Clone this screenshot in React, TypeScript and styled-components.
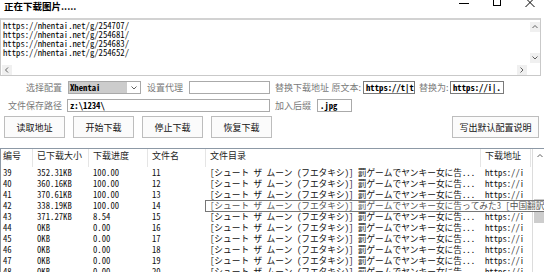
import React from 'react';
import styled, { createGlobalStyle } from 'styled-components';

const GlobalStyle = createGlobalStyle`
  html, body {
    margin: 0;
    padding: 0;
    background: #fff;
  }
  body {
    font-family: "Noto Sans CJK SC", "Noto Sans", sans-serif;
    font-size: 9px;
    color: #000;
  }
`;

const MONO = `"Noto Sans Mono CJK JP", "Liberation Mono", "Noto Sans CJK JP", monospace`;

const Window = styled.div`
  width: 544px;
  height: 272px;
  overflow: hidden;
  display: flex;
  flex-direction: column;
  background: #fff;
`;

const TitleBar = styled.div`
  height: 18px;
  flex-shrink: 0;
  display: flex;
  align-items: flex-start;
  justify-content: space-between;
`;

const Title = styled.div`
  padding-left: 4px;
  font-weight: bold;
  font-size: 9.5px;
  line-height: 12px;
`;

const Controls = styled.div`
  display: flex;
  gap: 24px;
  padding-right: 9px;
`;

const UrlBox = styled.div`
  width: 539px;
  height: 55px;
  flex-shrink: 0;
  border: 1px solid #c9c9c9;
  border-top: 2px solid #d2d2d2;
  display: grid;
  grid-template-columns: 1fr 10px;
  grid-template-rows: 1fr 10px;
`;

const UrlText = styled.div`
  padding: 1px 0 0 2px;
  font-family: ${MONO};
  font-size: 8.7px;
  line-height: 9px;
  white-space: pre;
  overflow: hidden;
`;

const VScroll = styled.div`
  display: flex;
  flex-direction: column;
  justify-content: space-between;
  padding: 2px 0;
`;

const HScroll = styled.div`
  display: flex;
  justify-content: space-between;
  padding: 0 3px 0 1px;
`;

const ArrowBox = styled.div`
  width: 10px;
  height: 10px;
  background: #f0f0f0;
  display: flex;
  align-items: center;
  justify-content: center;
`;

const Form = styled.div`
  display: flex;
  flex-direction: column;
  flex-shrink: 0;
  gap: 5px;
  margin-top: 5px;
`;

const FieldRow = styled.div`
  display: flex;
  align-items: center;
  height: 13px;
`;

const Label = styled.span<{ $w: number; $ml?: number }>`
  width: ${(p) => p.$w}px;
  margin-left: ${(p) => p.$ml ?? 0}px;
  flex-shrink: 0;
  text-align: right;
  color: #7a7a7a;
  font-size: 9px;
  line-height: 13px;
  white-space: nowrap;
`;

const Input = styled.div<{ $w: number; $ml: number; $dark?: boolean }>`
  width: ${(p) => p.$w}px;
  margin-left: ${(p) => p.$ml}px;
  height: 13px;
  box-sizing: border-box;
  flex-shrink: 0;
  border: 1px solid ${(p) => (p.$dark ? '#7a7a7a' : '#aaaaaa')};
  padding-left: 2px;
  font-family: ${MONO};
  font-weight: bold;
  font-size: 8.7px;
  line-height: 11px;
  white-space: pre;
  overflow: hidden;
`;

const Select = styled.div`
  width: 73px;
  margin-left: 6px;
  height: 13px;
  box-sizing: border-box;
  flex-shrink: 0;
  border: 1px solid #a9a9a9;
  display: flex;
  align-items: stretch;
`;

const Selected = styled.span`
  width: 57px;
  background: #cccccc;
  padding-left: 1px;
  font-family: ${MONO};
  font-weight: bold;
  font-size: 8.7px;
  line-height: 11px;
`;

const SelectArrow = styled.span`
  flex: 1;
  display: flex;
  align-items: center;
  justify-content: center;
`;

const ButtonRow = styled.div`
  display: flex;
  flex-shrink: 0;
  gap: 8px;
  padding: 0 5px 0 4px;
  margin-top: 4px;
`;

const Button = styled.button<{ $w: number; $push?: boolean }>`
  width: ${(p) => p.$w}px;
  height: 22px;
  margin-left: ${(p) => (p.$push ? 'auto' : '0')};
  padding: 0;
  background: #fbfbfb;
  border: 1px solid #bdbdbd;
  border-radius: 0;
  font-family: "Noto Sans CJK SC", sans-serif;
  font-size: 9px;
  color: #111;
`;

const Table = styled.div`
  margin-top: 10px;
  width: 545px;
  flex: 1;
  min-height: 0;
  border: 1px solid #8d99a6;
  border-right: none;
  border-bottom: none;
  display: flex;
  align-items: flex-start;
  overflow: hidden;
`;

const ListArea = styled.div`
  flex: 1;
  display: flex;
  flex-direction: column;
`;

const COLS = '32px 56px 59px 58px 275px 50px';

const HeaderRow = styled.div`
  display: grid;
  grid-template-columns: ${COLS};
  height: 18px;
  flex-shrink: 0;
`;

const HeaderCell = styled.div`
  padding: 1px 0 0 4px;
  border-right: 1px solid #e5e5e5;
  font-size: 9px;
  line-height: 11px;
  color: #1e1e1e;
  white-space: nowrap;
  overflow: hidden;
  &:first-child {
    padding-left: 2px;
  }
`;

const Row = styled.div`
  display: grid;
  grid-template-columns: ${COLS};
  height: 11px;
  flex-shrink: 0;
`;

const Cell = styled.div`
  position: relative;
  padding-left: 4px;
  font-family: ${MONO};
  font-size: 8.7px;
  line-height: 11px;
  color: #111;
  white-space: pre;
  overflow: hidden;
  &:first-child {
    padding-left: 2px;
  }
`;

const DirCell = styled(Cell)`
  overflow: visible;
`;

const Tip = styled.div`
  position: absolute;
  left: -1px;
  top: 0;
  z-index: 2;
  width: 360px;
  height: 12px;
  box-sizing: border-box;
  padding-left: 4px;
  background: #fff;
  border: 1px solid #767676;
  color: #555;
  font-family: ${MONO};
  font-size: 8.7px;
  line-height: 10px;
  white-space: pre;
`;

const ListScroll = styled.div`
  width: 13px;
  height: 130px;
  flex-shrink: 0;
  border-left: 1px solid #dcdcdc;
  display: flex;
  flex-direction: column;
  align-items: center;
`;

const ScrollUp = styled.div`
  height: 14px;
  display: flex;
  align-items: center;
`;

const Thumb = styled.div`
  margin-top: 36px;
  width: 11px;
  height: 24px;
  background: #cdcdcd;
`;

const Chevron: React.FC<{ dir: 'up' | 'down' | 'left' | 'right' }> = ({ dir }) => {
  const d = {
    up: 'M0.5 4 L3 1.5 L5.5 4',
    down: 'M0.5 1.5 L3 4 L5.5 1.5',
    left: 'M4 0.5 L1.5 3 L4 5.5',
    right: 'M1.5 0.5 L4 3 L1.5 5.5',
  }[dir];
  return (
    <svg width="6" height="6" viewBox="0 0 6 6">
      <path d={d} fill="none" stroke="#606060" strokeWidth="1" />
    </svg>
  );
};

const urls = [
  'https://nhentai.net/g/254707/',
  'https://nhentai.net/g/254681/',
  'https://nhentai.net/g/254683/',
  'https://nhentai.net/g/254652/',
];

const DIR = '[シュート ザ ムーン (フエタキシ)] 罰ゲームでヤンキー女に告...';
const FULL = '[シュート ザ ムーン (フエタキシ)] 罰ゲームでヤンキー女に告ってみた3 [中国翻訳]';

const rows = [
  { id: 39, size: '352.31KB', pct: '100.00', name: '11' },
  { id: 40, size: '360.16KB', pct: '100.00', name: '12' },
  { id: 41, size: '370.61KB', pct: '100.00', name: '13' },
  { id: 42, size: '338.19KB', pct: '100.00', name: '14', tip: true },
  { id: 43, size: '371.27KB', pct: '8.54', name: '15' },
  { id: 44, size: '0KB', pct: '0.00', name: '16' },
  { id: 45, size: '0KB', pct: '0.00', name: '17' },
  { id: 46, size: '0KB', pct: '0.00', name: '18' },
  { id: 47, size: '0KB', pct: '0.00', name: '19' },
  { id: 48, size: '0KB', pct: '0.00', name: '20' },
];

export default function App() {
  return (
    <>
      <GlobalStyle />
      <Window>
        <TitleBar>
          <Title>正在下载图片.....</Title>
          <Controls>
            <svg width="10" height="8" viewBox="0 0 10 8">
              <path d="M0 3.5 H10" stroke="#000" strokeWidth="1" />
            </svg>
            <svg width="8" height="8" viewBox="0 0 8 8">
              <rect x="0.5" y="-3.5" width="7" height="9" fill="none" stroke="#000" strokeWidth="1" />
            </svg>
            <svg width="10" height="8" viewBox="0 0 10 8">
              <path d="M0.5 -2 L9.5 7 M9.5 -2 L0.5 7" stroke="#000" strokeWidth="1" />
            </svg>
          </Controls>
        </TitleBar>

        <UrlBox>
          <UrlText>{urls.join('\n')}</UrlText>
          <VScroll>
            <ArrowBox><Chevron dir="up" /></ArrowBox>
            <ArrowBox><Chevron dir="down" /></ArrowBox>
          </VScroll>
          <HScroll>
            <ArrowBox><Chevron dir="left" /></ArrowBox>
            <ArrowBox><Chevron dir="right" /></ArrowBox>
          </HScroll>
          <div />
        </UrlBox>

        <Form>
          <FieldRow>
            <Label $w={62}>选择配置</Label>
            <Select>
              <Selected>Xhentai</Selected>
              <SelectArrow><Chevron dir="down" /></SelectArrow>
            </Select>
            <Label $w={36} $ml={6}>设置代理</Label>
            <Input $w={81} $ml={6}></Input>
            <Label $w={51} $ml={5}>替换下载地址</Label>
            <Label $w={31} $ml={4}>原文本:</Label>
            <Input $w={52} $ml={2} $dark>https://t|t</Input>
            <Label $w={29} $ml={4}>替换为:</Label>
            <Input $w={54} $ml={2} $dark>https://i|.</Input>
          </FieldRow>
          <FieldRow>
            <Label $w={62}>文件保存路径</Label>
            <Input $w={203} $ml={5}>z:\1234\</Input>
            <Label $w={36} $ml={5}>加入后缀</Label>
            <Input $w={35} $ml={6}>.jpg</Input>
          </FieldRow>
        </Form>

        <ButtonRow>
          <Button $w={61}>读取地址</Button>
          <Button $w={61}>开始下载</Button>
          <Button $w={61}>停止下载</Button>
          <Button $w={61}>恢复下载</Button>
          <Button $w={87} $push>写出默认配置说明</Button>
        </ButtonRow>

        <Table>
          <ListArea>
            <HeaderRow>
              <HeaderCell>编号</HeaderCell>
              <HeaderCell>已下载大小</HeaderCell>
              <HeaderCell>下载进度</HeaderCell>
              <HeaderCell>文件名</HeaderCell>
              <HeaderCell>文件目录</HeaderCell>
              <HeaderCell>下载地址</HeaderCell>
            </HeaderRow>
            {rows.map((r) => (
              <Row key={r.id}>
                <Cell>{r.id}</Cell>
                <Cell>{r.size}</Cell>
                <Cell>{r.pct}</Cell>
                <Cell>{r.name}</Cell>
                <DirCell>{r.tip ? <Tip>{FULL}</Tip> : DIR}</DirCell>
                <Cell>{r.tip ? '' : 'https://i'}</Cell>
              </Row>
            ))}
          </ListArea>
          <ListScroll>
            <ScrollUp><Chevron dir="up" /></ScrollUp>
            <Thumb />
          </ListScroll>
        </Table>
      </Window>
    </>
  );
}
